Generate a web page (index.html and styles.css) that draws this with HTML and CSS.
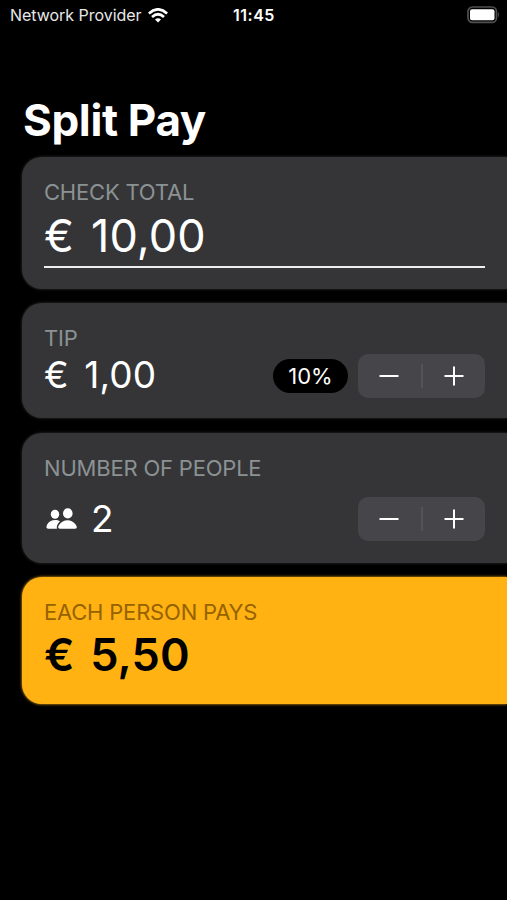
FILE: index.html
```html
<!DOCTYPE html>
<html lang="en">
<head>
<meta charset="utf-8">
<title>Split Pay</title>
<link rel="stylesheet" href="styles.css">
</head>
<body>
<header class="status">
  <div class="carrier"><span>Network Provider</span>
    <svg class="wifi" width="20" height="15" viewBox="0 0 20 15"><path d="M10 14.6 7 11.600Q10 9 13 11.600Z" fill="#fff"/><path d="M.9 5.400Q10-2.700 19.100 5.400M4 8.900Q10 3.600 16 8.900" fill="none" stroke="#fff" stroke-width="2.700"/></svg>
  </div>
  <span class="time">11:45</span>
  <svg class="battery" width="33" height="18" viewBox="0 0 33 18"><rect x="1" y="1" width="28.500" height="15.400" rx="4.500" fill="none" stroke="#505050" stroke-width="1.700"/><rect x="3" y="3.200" width="24.500" height="11" rx="2" fill="#fff"/><path d="M31 6Q33 8.700 31 11.400Z" fill="#505050"/></svg>
</header>
<main>
  <h1>Split Pay</h1>
  <section class="card total">
    <h2 class="label">CHECK TOTAL</h2>
    <div class="amount field">€ 10,00</div>
  </section>
  <section class="card tip">
    <h2 class="label">TIP</h2>
    <div class="row">
      <span class="value">€ 1,00</span>
      <span class="badge">10%</span>
      <div class="stepper">
        <button aria-label="Decrease tip"><svg width="20" height="20"><path d="M.5 10h19"/></svg></button>
        <button aria-label="Increase tip"><svg width="20" height="20"><path d="M.5 10h19M10 .5v19"/></svg></button>
      </div>
    </div>
  </section>
  <section class="card people">
    <h2 class="label">NUMBER OF PEOPLE</h2>
    <div class="row">
      <svg class="persons" width="32" height="22" viewBox="0 0 32 22"><ellipse cx="9" cy="6.200" rx="4.200" ry="4.500"/><ellipse cx="21.800" cy="5.400" rx="4.800" ry="5.100"/><path d="M2.500 20.800C-.5 20.800.3 18 1.500 16 4 11.700 10.500 11 14 13.500 11.500 15.500 10.300 18 11 20.800ZM14 20.800C11.500 20.800 12 18.600 13 17 17 10.700 26 10.700 30 17 31 18.600 31.500 20.800 29 20.800Z"/></svg>
      <span class="value count">2</span>
      <div class="stepper">
        <button aria-label="Fewer people"><svg width="20" height="20"><path d="M.5 10h19"/></svg></button>
        <button aria-label="More people"><svg width="20" height="20"><path d="M.5 10h19M10 .5v19"/></svg></button>
      </div>
    </div>
  </section>
  <section class="card result">
    <h2 class="label">EACH PERSON PAYS</h2>
    <div class="amount">€ 5,50</div>
  </section>
</main>
</body>
</html>
```

FILE: styles.css
```css
* { box-sizing: border-box; }
body {
  margin: 0;
  height: 900px;
  overflow: hidden;
  background: #000;
  color: #fff;
  font-family: Inter, "Liberation Sans", sans-serif;
}
.status {
  display: grid;
  grid-template-columns: 1fr auto 1fr;
  align-items: center;
  height: 30px;
  padding: 0 7px 0 10px;
  font-size: 16px;
  line-height: 30px;
}
.carrier { display: flex; align-items: center; gap: 6px; white-space: nowrap; color: #e8e8e8; }
.carrier span { letter-spacing: -.03px; }
.time { font-weight: 600; letter-spacing: .5px; margin-right: 2px; }
.battery { justify-self: end; }
main { padding-left: 22px; }
h1 {
  margin: 63px 0 0 1px;
  height: 64px;
  line-height: 54px;
  font-size: 44px;
  font-weight: 700;
  letter-spacing: -.35px;
}
.card {
  width: 485px;
  padding: 21px 22px 0;
  border-radius: 20px 0 0 20px;
  background: #353537;
  box-shadow: 0 0 3px #353537;
}
.total { height: 132px; margin-bottom: 14px; }
.tip { height: 115px; margin-bottom: 15px; }
.people { height: 130px; margin-bottom: 14px; }
.result { height: 127px; background: #ffb211; color: #000; box-shadow: 0 0 3px #ffb211; }
.label {
  margin: 0;
  font-size: 22px;
  line-height: 28px;
  font-weight: 400;
  letter-spacing: -.2px;
  color: #8b9294;
}
.result .label { color: #966200; }
.amount { font-size: 45px; line-height: 60px; height: 62px; white-space: nowrap; word-spacing: 4px; letter-spacing: .15px; }
.field { border-bottom: 2px solid #eee; }
.result .amount { font-weight: 600; line-height: 58px; }
.row { display: flex; align-items: center; height: 44px; margin-top: 2px; }
.people .row { margin-top: 15px; }
.value { font-size: 37px; line-height: 44px; word-spacing: 5px; letter-spacing: .1px; }
.tip .value { position: relative; top: -1px; }
.badge {
  width: 75px;
  height: 34px;
  margin-left: auto;
  border-radius: 17px;
  background: #000;
  font-size: 22px;
  line-height: 34px;
  text-align: center;
}
.stepper {
  display: flex;
  position: relative;
  width: 127px;
  height: 44px;
  margin-left: 10px;
  border-radius: 10px;
  background: #464549;
}
.stepper::after {
  content: "";
  position: absolute;
  left: 63px;
  top: 10px;
  width: 1.5px;
  height: 24px;
  background: #545357;
}
.stepper button {
  flex: 1;
  display: flex;
  align-items: center;
  justify-content: center;
  padding: 0;
  border: 0;
  background: none;
}
.stepper button:first-child { padding-right: 2px; }
.stepper path { stroke: #fff; stroke-width: 2; fill: none; }
.persons { fill: #fff; margin-left: 2px; }
.count { margin: 0 auto 0 13px; }
```
